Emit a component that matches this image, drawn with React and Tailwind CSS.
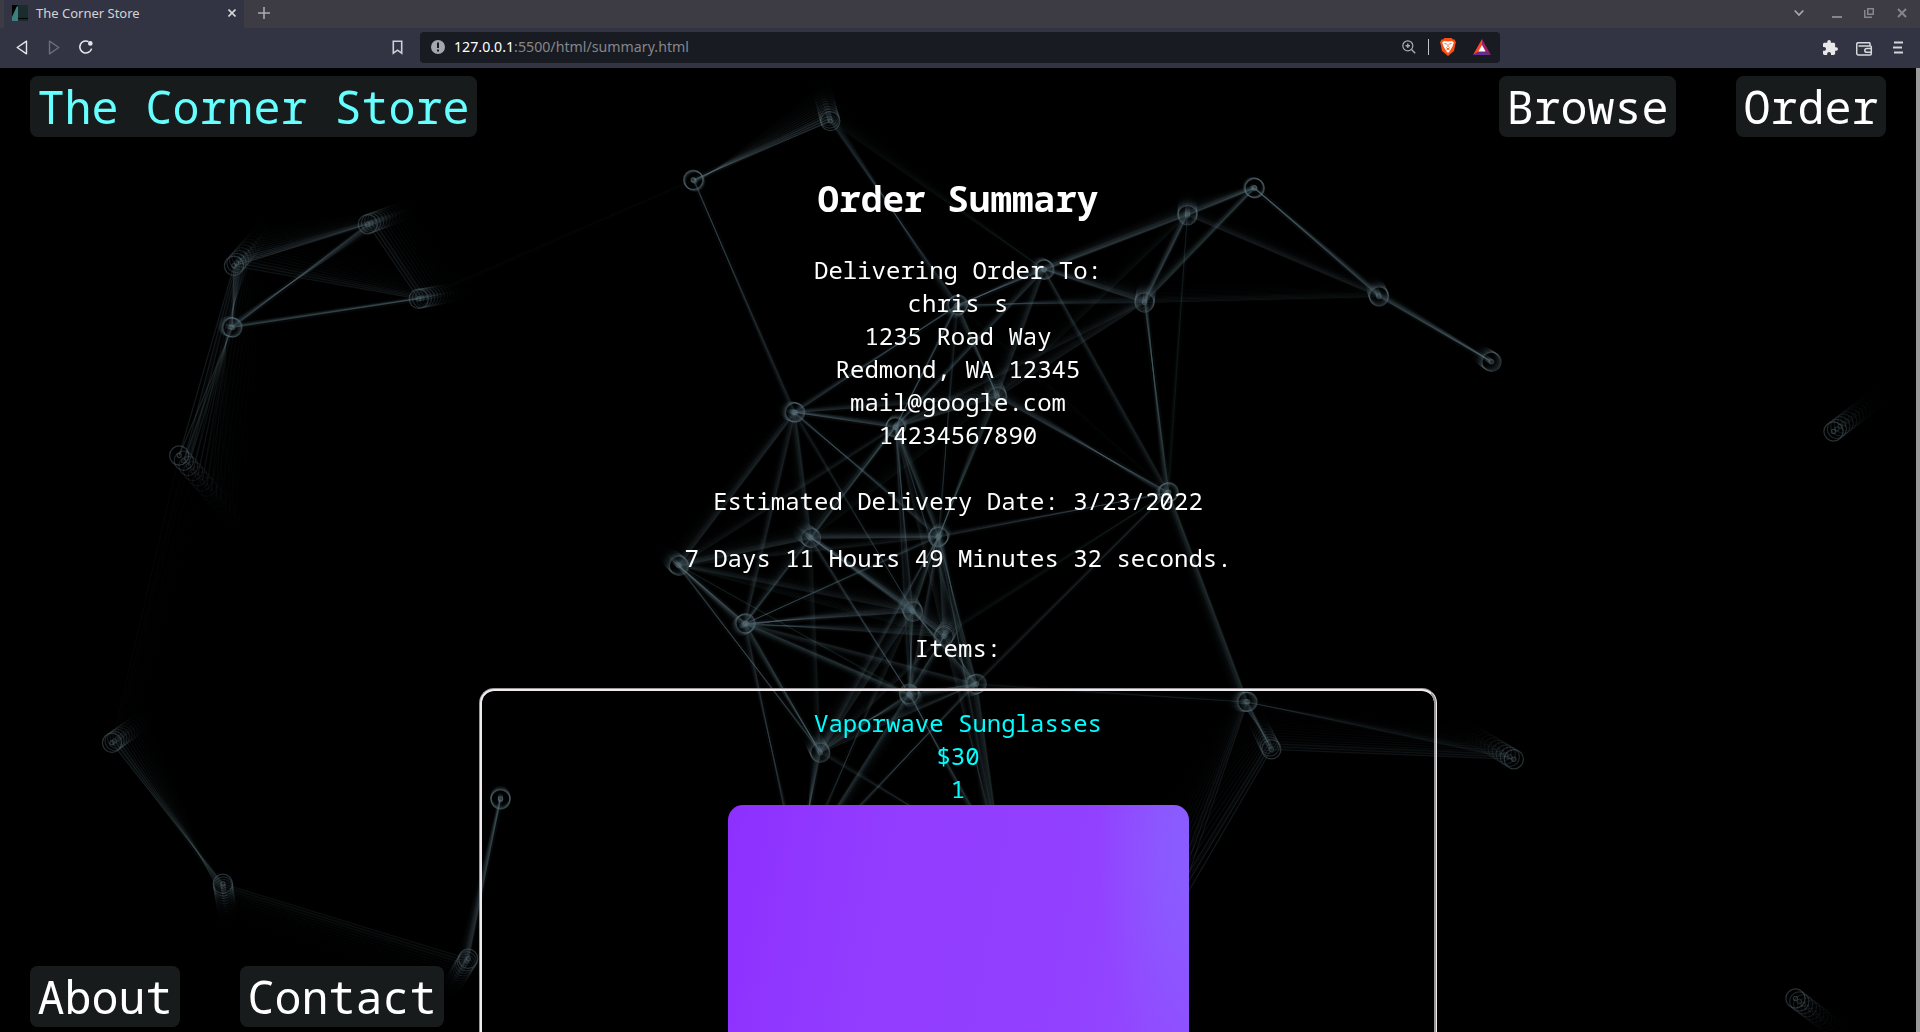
import React from "react";

const P = {
  A: [829.8, 120.6, -0.7, -2.6], B: [692.7, 179.3, 0.3, 0.3], C: [1187, 214.7, 0, -1.1], D: [1254.3, 187.7, -0.3, -0.2],
  E: [1044, 269.3, -0.6, -0.4], F: [1144, 302, 0.2, -1.4], G: [957.5, 304, -0.6, 0.6], H: [794.7, 412, -0.7, -0.2],
  I: [894.8, 427, 0.3, -0.6], J: [996.8, 396.5, -0.5, -1.5], K: [1168.3, 491.7, -0.6, 0.3], L: [810.6, 537.6, -1.1, -0.9],
  M: [937.6, 536.7, 0.4, -0.6], N: [678.5, 565.3, -0.9, -0.8], O: [745.2, 622.7, -0.6, 0.4], P: [912.6, 611.3, -0.7, -1.4],
  Q: [943.2, 636, 1, -1.6], R: [976.2, 683.3, -1, 0.4], S: [908.4, 693.3, 0.6, 0.8], T: [819.8, 752.2, -0.7, -1.3],
  U: [1247, 701.3, -1, 0], V: [1270.8, 748.8, -1.4, -2.8], W: [233.5, 265.3, 2.5, -2.9], X: [367.3, 223.7, 3.2, -1.2],
  Y: [418.3, 298.3, 3.2, -0.6], Z: [232, 327, -0.7, -0.2], a: [178.7, 455, 4.6, 5.2], b: [111.5, 742.3, 2.6, -1.9],
  c: [222.3, 883.3, 0.4, 2.6], d: [467.7, 958.3, -1.5, 2.5], e: [500, 799, 0, -0.5], f: [1378.5, 296, -0.4, -1],
  g: [1491, 361.3, -1, -0.7], h: [1833, 431, 3.4, -2.6], i: [1513.3, 758.7, -4, -2.4], j: [1795, 998, 3.8, 2.9],
  x: [796, 870, 0.8, 0.3], y: [1001, 860, -1, 0], z: [1174, 915, -5, -2],
};

// Links between two points with their relative strength.
const LINKS = `AB9 AG5 AE2 BH4 YB1 GE7 GF5 GH5 GI5 GJ6 GM3 GK1 EC8 EF7 EJ5 EI5 EK4 CD8 CF7 Cf4 CK2 CJ2 DF6 Df7 Ff3 FK6 FJ4 FI3 fg8
JK7 JI7 JH5 JM6 JL2 HI7 HL5 HM5 HN5 HO4 HP3 IL6 IM6 IN3 IP4 IQ3 IO2 IS3 IR3 LM7 LN6 LO5 LP7 LS4 LQ5 LT3 MK4 MO4 MN3 MP6 MQ5 MS4 MR5 MT4
NO9 NP4 NQ2 NT4 NS2 OP7 OQ5 OS6 OR4 OT6 Ox4 PQ7 PS6 PR6 PT5 Px3 QR5 QS5 QT3 QK2 RS6 RT4 RK3 RU2 Rx4 Ry6 ST6 Sx5 Sy5 Qx2
KU6 UV7 Ui3 Vi4 Uz4 Vz5 Tx7 Ty3 My3 Qy3 ed7 dc3 bc6 ba1 WX7 WZ7 WY4 Wa5 XZ7 XY5 ZY6 Za6`.split(/\s+/);

const FRAMES = Array.from({ length: 14 }, (_, k) => 13 - k);

function Network() {
  const at = (n, k) => [P[n][0] + 0.5 + P[n][2] * k, P[n][1] + 0.5 + P[n][3] * k];
  return (
    <svg className="absolute inset-0 size-full" viewBox="0 68 1920 964" fill="none" stroke="#5f757e" strokeWidth="1.25">
      <g strokeWidth="6">
        {LINKS.map((l) => {
          const [x1, y1] = at(l[0], 1.5);
          const [x2, y2] = at(l[1], 1.5);
          return <line key={l} x1={x1} y1={y1} x2={x2} y2={y2} opacity={Number(l[2]) * 0.011} />;
        })}
      </g>
      {FRAMES.map((k) => (
        <g key={k}>
          <g opacity={Math.pow(0.82, k)}>
            {LINKS.map((l) => {
              const [x1, y1] = at(l[0], k);
              const [x2, y2] = at(l[1], k);
              return <line key={l} x1={x1} y1={y1} x2={x2} y2={y2} opacity={Number(l[2]) * 0.041} />;
            })}
          </g>
          <g opacity={Math.pow(0.74, k)}>
            {Object.keys(P).map((n) => {
              const [cx, cy] = at(n, k);
              return (
                <g key={n} opacity="0.42">
                  <circle cx={cx} cy={cy} r="9.6" />
                  <circle cx={cx} cy={cy} r="2.1" />
                </g>
              );
            })}
          </g>
        </g>
      ))}
    </svg>
  );
}

function NavLink({ children, cyan }) {
  return (
    <a className={"flex h-[61px] items-center rounded-[7.5px] bg-[#181b1b] px-[7.5px] text-[45px] leading-[61px] whitespace-pre " + (cyan ? "text-[#66ffff]" : "text-white")}>
      {children}
    </a>
  );
}

function TitleBar() {
  return (
    <div className="flex h-7 items-stretch bg-[#3d3c44] pl-1">
      <div className="flex w-60 items-center bg-[#323443] pb-[2px] pr-2 pl-2">
        <svg className="size-4 shrink-0" viewBox="0 0 16 16">
          <rect width="16" height="16" fill="#1b2c2d" />
          <path d="M0 0H6L0 12Z" fill="#020404" />
          <path d="M5 1L6 2V16H0V12Z" fill="#3d7f7e" />
          <path d="M6 13.5H16" stroke="#030606" strokeWidth="1.2" />
        </svg>
        <span className="ml-2 flex-1 text-[13px] leading-[26px] text-[#d2d3d6]">The Corner Store</span>
        <svg className="size-2" viewBox="0 0 8 8" stroke="#d5d6dc" strokeWidth="1.6"><path d="M.5 .5L7.5 7.5M7.5 .5L.5 7.5" /></svg>
      </div>
      <svg className="ml-3.5 mt-[7px] size-3" viewBox="0 0 12 12" stroke="#a9a9ad" strokeWidth="1.6"><path d="M6 0V12M0 6H12" /></svg>
      <div className="ml-auto flex items-center pr-[13px] pb-[2px]">
        <svg className="h-2 w-[10px]" viewBox="0 0 10 8" fill="none" stroke="#a6a6ab" strokeWidth="1.8"><path d="M.7 1.5L5 6L9.3 1.5" /></svg>
        <svg className="ml-7 mt-[7px] h-[3px] w-[10px]" viewBox="0 0 10 3"><rect y="1" width="10" height="2" fill="#85858b" /></svg>
        <svg className="ml-[22px] size-[10px]" viewBox="0 0 10 10" fill="none" stroke="#85858b"><path d="M3.75 .75H9.25V6.25H3.75Z" strokeWidth="1.5" /><path d="M.75 2V9.25H8" strokeWidth="1.5" /></svg>
        <svg className="ml-[23px] size-[10px]" viewBox="0 0 10 10" stroke="#85858b" strokeWidth="2"><path d="M1 1L9 9M9 1L1 9" /></svg>
      </div>
    </div>
  );
}

function ToolBar() {
  return (
    <div className="flex h-10 items-center bg-[#323443] pb-[2px]">
      <svg className="ml-4 h-[15px] w-3" viewBox="0 0 12 15" fill="none" stroke="#e6e7ea" strokeWidth="1.4" strokeLinejoin="round"><path d="M10.5 1.2V13.8L1.2 7.5Z" /></svg>
      <svg className="ml-5 h-[15px] w-3" viewBox="0 0 12 15" fill="none" stroke="#6c6e7b" strokeWidth="1.4" strokeLinejoin="round"><path d="M1.5 1.2V13.8L10.8 7.5Z" /></svg>
      <svg className="ml-[18px] size-4" viewBox="0 0 16 16" fill="none" stroke="#e6e7ea" strokeWidth="1.6"><path d="M13.6 9.6A6 6 0 1 1 10.5 2.6" /><circle cx="12.3" cy="4.4" r="2.3" fill="#e6e7ea" stroke="none" /></svg>
      <svg className="ml-[298px] h-[15px] w-[11px]" viewBox="0 0 11 15" fill="none" stroke="#cfd0d4" strokeWidth="1.6"><path d="M1.3 1.3H9.7V13.2L5.5 10.2L1.3 13.2Z" /></svg>
      <div className="ml-[17px] flex h-[31px] w-[1080px] items-center rounded bg-[#181b22] pb-px pl-[11px] pr-[9px]">
        <svg className="size-[14px]" viewBox="0 0 14 14"><circle cx="7" cy="7" r="7" fill="#a4a7af" /><path d="M6 2.5H8V8H6ZM6 9.5H8V11.5H6Z" fill="#181b22" /></svg>
        <span className="ml-[9px] text-[14.2px] leading-[30px] text-[#85868a]"><span className="text-white">127.0.0.1</span>:5500/html/summary.html</span>
        <svg className="ml-auto size-[14px]" viewBox="0 0 14 14" fill="none" stroke="#a8abb2" strokeWidth="1.2"><circle cx="5.8" cy="5.8" r="5" /><path d="M9.5 9.5L13.2 13.2M3.6 5.8H8M5.8 3.6V8" strokeWidth="1.4" /></svg>
        <div className="ml-3 h-4 w-px bg-[#c2c3c7]" />
        <svg className="ml-[11px] h-[18px] w-4" viewBox="0 0 16 18">
          <path d="M4.5 0H11.5L13 1.6H14.6L16 4.4L15.4 6L14 13L8 18L2 13L.6 6L0 4.4L1.4 1.6H3Z" fill="#fb4f12" />
          <path d="M2.2 4.6L4 3L8 3.6L12 3L13.8 4.6L12.2 9L11 11L8.8 14.4H7.2L5 11L3.8 9Z" fill="#fff" />
          <path d="M4.6 5.6L6.8 6M11.4 5.6L9.2 6M8 6V9M6.2 9.6L8 10.8L9.8 9.6M6.4 12L8 11L9.6 12" stroke="#fb4f12" strokeWidth=".9" fill="none" />
        </svg>
        <svg className="ml-[17px] h-4 w-[18px]" viewBox="0 0 18 16">
          <path d="M9 0L0 16L9 11Z" fill="#ff4724" /><path d="M9 0L18 16L9 11Z" fill="#9e1f63" /><path d="M0 16H18L9 11Z" fill="#662d91" /><path d="M9 6L5.4 12.5H12.6Z" fill="#fff" />
        </svg>
      </div>
      <div className="ml-auto flex items-center pr-[17px]">
        <svg className="size-[15px]" viewBox="2 1 21 21" fill="#e8e8ea"><path d="M20.5 11H19V7c0-1.1-.9-2-2-2h-4V3.5a2.5 2.5 0 0 0-5 0V5H4c-1.1 0-2 .9-2 2v3.8h1.5c1.5 0 2.7 1.2 2.7 2.7S5 16.2 3.5 16.2H2V20c0 1.1.9 2 2 2h3.8v-1.5c0-1.5 1.2-2.7 2.7-2.7s2.7 1.2 2.7 2.7V22H17c1.1 0 2-.9 2-2v-4h1.5a2.5 2.5 0 0 0 0-5z" /></svg>
        <svg className="ml-[18px] mt-[3px] h-[14px] w-[17px]" viewBox="0 0 17 14" fill="none" stroke="#d8d9dd" strokeWidth="1.5"><path d="M14 4V1.5Q14 .7 13 .7H2.5Q.7 .7 .7 2.5V11Q.7 13 2.5 13H14Q15.3 13 15.3 12V4.800Q15.3 4 14.5 4H2.5M16 6.5H11Q8.8 6.5 8.8 8.4T11 10.3H16" /></svg>
        <svg className="ml-[20px] h-[13px] w-[10px]" viewBox="0 0 10 13" stroke="#d4d5d9" strokeWidth="2"><path d="M1 1.5H10M0 6.5H9M1 11.5H10" /></svg>
      </div>
    </div>
  );
}

export default function App() {
  return (
    <div className="flex h-[1032px] w-[1920px] flex-col overflow-hidden bg-black font-['Noto_Sans',sans-serif]">
      <TitleBar />
      <ToolBar />
      <div className="relative flex min-h-0 flex-1 overflow-hidden font-['Noto_Sans_Mono','DejaVu_Sans_Mono',monospace]">
        <Network />
        <div className="relative min-w-0 flex-1">
          <main className="flex flex-col items-center text-center text-2xl leading-[33px] text-white">
            <h1 className="mt-[106px] text-4xl leading-[49px] font-bold">Order Summary</h1>
            <div className="mt-[30px]">
              <p>Delivering Order To:</p>
              <p>chris s</p>
              <p>1235 Road Way</p>
              <p>Redmond, WA 12345</p>
              <p>mail@google.com</p>
              <p>14234567890</p>
            </div>
            <p className="mt-[33px]">Estimated Delivery Date: 3/23/2022</p>
            <p className="mt-6">7 Days 11 Hours 49 Minutes 32 seconds.</p>
            <p className="mt-[57px]">Items:</p>
            <section className="mt-6 flex h-[400px] w-[958px] flex-col items-center rounded-[15px] border-3 border-[#eeeaee] pt-[15px] text-[#00ffff] [border-style:groove]">
              <p>Vaporwave Sunglasses</p>
              <p>$30</p>
              <p>1</p>
              <div className="h-[280px] w-[461px] rounded-t-[15px] bg-[radial-gradient(ellipse_90px_260px_at_100%_15%,#8a5cff_15%,transparent_100%),linear-gradient(100deg,#8d30ff,#923cff_30%,#9240ff_70%,#924cff)]" />
            </section>
          </main>
          <header className="absolute inset-x-0 top-2 flex justify-between px-[30px]">
            <NavLink cyan>The Corner Store</NavLink>
            <nav className="flex gap-[60px]"><NavLink>Browse</NavLink><NavLink>Order</NavLink></nav>
          </header>
          <footer className="absolute bottom-[5px] left-[30px] flex gap-[60px]"><NavLink>About</NavLink><NavLink>Contact</NavLink></footer>
        </div>
        <div className="relative w-1 bg-[#9b9b9b]" />
      </div>
    </div>
  );
}
